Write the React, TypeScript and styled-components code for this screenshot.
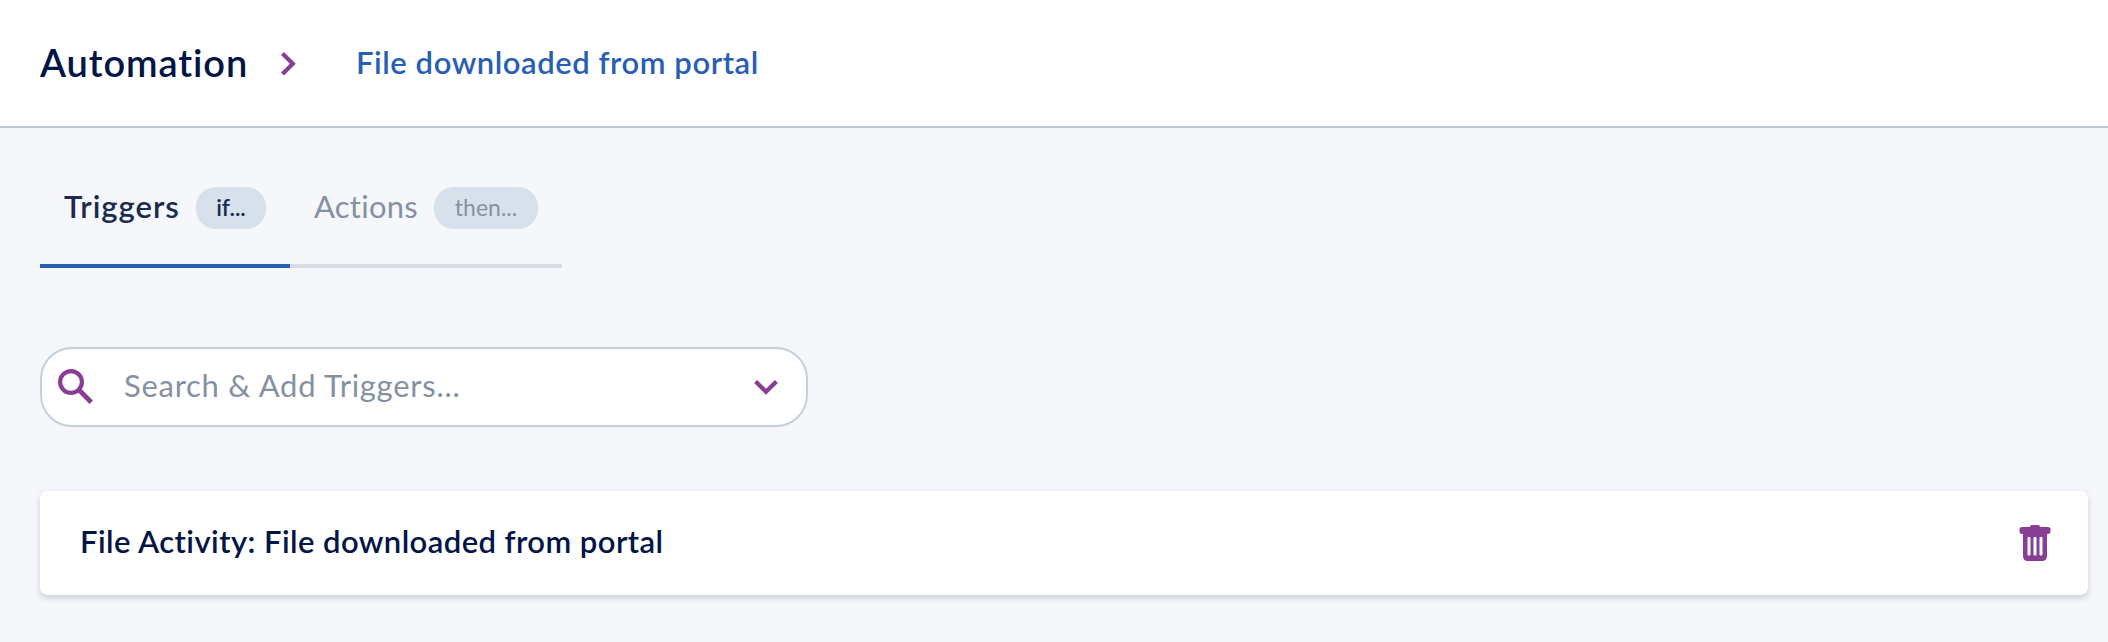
import React from "react";
import styled, { createGlobalStyle } from "styled-components";

const GlobalStyle = createGlobalStyle`
  * { box-sizing: border-box; }
  body {
    margin: 0;
    background: #f5f7fb;
    font-family: Lato, "Liberation Sans", sans-serif;
    color: #021545;
  }
`;

const Page = styled.div`
  height: 642px;
  background: #f5f7fb;
`;

const Header = styled.header`
  display: flex;
  align-items: center;
  height: 128px;
  padding: 2px 0 0 40px;
  background: #fff;
  border-bottom: 2px solid #c0c6d2;
`;

const Title = styled.h1`
  margin: 0;
  padding-bottom: 4px;
  width: 240px;
  font-size: 38px;
  font-weight: 600;
  line-height: 48px;
  letter-spacing: 0.9px;
  white-space: nowrap;
`;

const Crumb = styled.a`
  margin-left: 60px;
  padding-bottom: 4px;
  color: #285fb4;
  font-size: 31px;
  font-weight: 600;
  line-height: 40px;
  letter-spacing: 0.55px;
  white-space: nowrap;
`;

const Content = styled.main`
  padding: 32px 20px 0 40px;
`;

const Tabs = styled.nav`
  display: flex;
`;

const Tab = styled.div<{ $active?: boolean; $width: number }>`
  display: flex;
  justify-content: space-between;
  align-items: center;
  width: ${(p) => p.$width}px;
  height: 108px;
  padding: 0 24px 8px;
  border-bottom: 4px solid ${(p) => (p.$active ? "#285fb4" : "#d9dbe3")};
  color: ${(p) => (p.$active ? "#1b2b50" : "#8591a1")};
  font-size: 31px;
  font-weight: ${(p) => (p.$active ? 600 : 400)};
  letter-spacing: ${(p) => (p.$active ? 1 : 0.25)}px;
  white-space: nowrap;
`;

const TabLabel = styled.span`
  padding-bottom: 4px;
`;

const Pill = styled.span<{ $width: number }>`
  width: ${(p) => p.$width}px;
  height: 42px;
  border-radius: 20px;
  background: #d7e1eb;
  font-size: 23px;
  line-height: 40px;
  letter-spacing: 0;
  text-align: center;
`;

const SearchBox = styled.div`
  display: flex;
  align-items: center;
  width: 768px;
  height: 80px;
  margin-top: 79px;
  padding: 0 28px 0 16px;
  border: 2px solid #c5cfdb;
  border-radius: 32px;
  background: #fff;
`;

const Placeholder = styled.span`
  flex: 1;
  margin-left: 30px;
  padding-bottom: 4px;
  color: #8591a1;
  font-size: 31px;
  line-height: 40px;
  letter-spacing: 0.73px;
`;

const TriggerCard = styled.section`
  display: flex;
  align-items: center;
  justify-content: space-between;
  height: 104px;
  margin-top: 64px;
  padding: 0 37px 0 40px;
  border-radius: 8px;
  background: #fff;
  box-shadow: 0 3px 6px rgba(40, 65, 75, 0.22);
`;

const TriggerName = styled.span`
  padding-bottom: 4px;
  font-size: 31px;
  font-weight: 600;
  line-height: 40px;
  letter-spacing: 0.43px;
`;

const Icon = styled.svg`
  display: block;
  flex: none;
  fill: none;
  stroke: #883e94;
`;

export default function App() {
  return (
    <Page>
      <GlobalStyle />
      <Header>
        <Title>Automation</Title>
        <Icon width="16" height="26" viewBox="0 0 16 26" strokeWidth="4.2">
          <path d="M2.5 2.5 12.8 12.8 2.5 23.1" />
        </Icon>
        <Crumb>File downloaded from portal</Crumb>
      </Header>
      <Content>
        <Tabs>
          <Tab $active $width={250}>
            <TabLabel>Triggers</TabLabel>
            <Pill $width={70}>if...</Pill>
          </Tab>
          <Tab $width={272}>
            <TabLabel>Actions</TabLabel>
            <Pill $width={104}>then...</Pill>
          </Tab>
        </Tabs>
        <SearchBox>
          <Icon width="36" height="36" viewBox="0 0 36 36" strokeWidth="4.2">
            <circle cx="13" cy="13" r="10.9" />
            <path d="M21 21 33.3 33.3" strokeWidth="4.8" />
          </Icon>
          <Placeholder>Search &amp; Add Triggers...</Placeholder>
          <Icon width="24" height="16" viewBox="0 0 24 16" strokeWidth="4.2">
            <path d="M1.6 2.4 12 12.8 22.4 2.4" />
          </Icon>
        </SearchBox>
        <TriggerCard>
          <TriggerName>File Activity: File downloaded from portal</TriggerName>
          <Icon width="32" height="36" viewBox="0 0 32 36">
            <path
              fill="#883e94"
              stroke="none"
              fillRule="evenodd"
              d="M13 0h6q2 0 2 2h8q2.500 0 2.500 2.500v2q0 2.500-2.500 2.500h-1v22q0 5-5 5H9q-5 0-5-5V9H3Q.5 9 .5 6.500v-2Q.5 2 3 2h8q0-2 2-2zM8.500 13v16.500q0 1 1 1h1q1 0 1-1V13q0-1-1-1h-1q-1 0-1 1zm6 0v16.500q0 1 1 1h1q1 0 1-1V13q0-1-1-1h-1q-1 0-1 1zm6 0v16.500q0 1 1 1h1q1 0 1-1V13q0-1-1-1h-1q-1 0-1 1z"
            />
          </Icon>
        </TriggerCard>
      </Content>
    </Page>
  );
}
